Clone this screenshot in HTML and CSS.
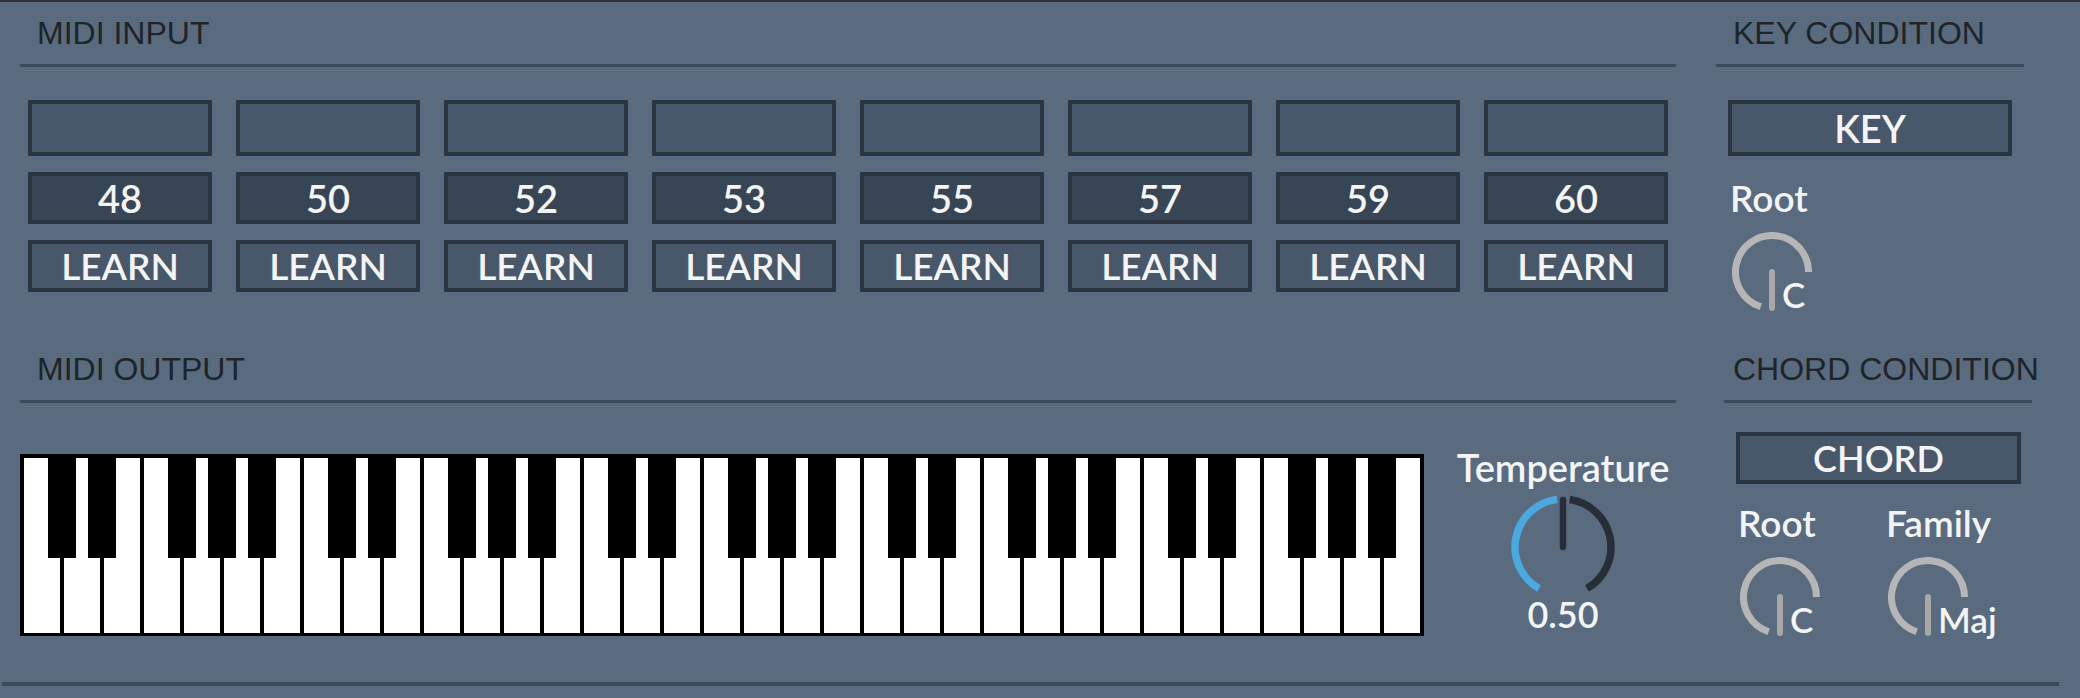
FILE: index.html
```html
<!doctype html>
<html>
<head>
<meta charset="utf-8">
<title>MIDI Chord Generator</title>
<link rel="stylesheet" href="styles.css">
</head>
<body>
<div id="panel">
	<div class="row row_top">
		<div class="sec sec_input">
			<h2 class="sec_head">MIDI INPUT</h2>
			<div class="slots">
				<div class="slot"><div class="cell note"></div><div class="cell num">48</div><div class="cell learn">LEARN</div></div>
				<div class="slot"><div class="cell note"></div><div class="cell num">50</div><div class="cell learn">LEARN</div></div>
				<div class="slot"><div class="cell note"></div><div class="cell num">52</div><div class="cell learn">LEARN</div></div>
				<div class="slot"><div class="cell note"></div><div class="cell num">53</div><div class="cell learn">LEARN</div></div>
				<div class="slot"><div class="cell note"></div><div class="cell num">55</div><div class="cell learn">LEARN</div></div>
				<div class="slot"><div class="cell note"></div><div class="cell num">57</div><div class="cell learn">LEARN</div></div>
				<div class="slot"><div class="cell note"></div><div class="cell num">59</div><div class="cell learn">LEARN</div></div>
				<div class="slot"><div class="cell note"></div><div class="cell num">60</div><div class="cell learn">LEARN</div></div>
			</div>
		</div>
		<div class="sec sec_key">
			<h2 class="sec_head">KEY CONDITION</h2>
			<div class="btn btn_key">KEY</div>
			<div class="dial">
				<span class="dial_label">Root</span>
				<div class="knob">
					<svg width="80" height="80" viewBox="0 0 80 80">
						<path d="M28.72 74.71 A36.5 36.5 0 1 1 76.5 40" fill="none" stroke="#b6b6b6" stroke-width="7"/>
						<line x1="40" y1="40" x2="40" y2="76" stroke="#a7a7a7" stroke-width="6" stroke-linecap="round"/>
					</svg>
					<span class="knob_val">C</span>
				</div>
			</div>
		</div>
	</div>
	<div class="row row_bottom">
		<div class="sec sec_output">
			<h2 class="sec_head">MIDI OUTPUT</h2>
			<div class="out_body">
				<div class="keyboard">
					<div class="octave"><span class="bk cs"></span><span class="bk ds"></span><span class="bk fs"></span><span class="bk gs"></span><span class="bk as"></span></div>
					<div class="octave"><span class="bk cs"></span><span class="bk ds"></span><span class="bk fs"></span><span class="bk gs"></span><span class="bk as"></span></div>
					<div class="octave"><span class="bk cs"></span><span class="bk ds"></span><span class="bk fs"></span><span class="bk gs"></span><span class="bk as"></span></div>
					<div class="octave"><span class="bk cs"></span><span class="bk ds"></span><span class="bk fs"></span><span class="bk gs"></span><span class="bk as"></span></div>
					<div class="octave"><span class="bk cs"></span><span class="bk ds"></span><span class="bk fs"></span><span class="bk gs"></span><span class="bk as"></span></div>
				</div>
				<div class="temp">
					<span class="temp_label">Temperature</span>
					<svg class="temp_dial" width="110" height="104" viewBox="0 0 110 104">
						<path d="M31 96.57 A48 48 0 0 1 49.15 7.36" fill="none" stroke="#4ba9df" stroke-width="7.5"/>
						<path d="M61.68 7.47 A48 48 0 0 1 79 96.57" fill="none" stroke="#262f38" stroke-width="7.5"/>
						<line x1="55" y1="8" x2="55" y2="55" stroke="#262f38" stroke-width="6.5" stroke-linecap="round"/>
					</svg>
					<span class="temp_val">0.50</span>
				</div>
			</div>
		</div>
		<div class="sec sec_chord">
			<h2 class="sec_head">CHORD CONDITION</h2>
			<div class="btn btn_chord">CHORD</div>
			<div class="chord_dials">
				<div class="dial">
					<span class="dial_label">Root</span>
					<div class="knob">
						<svg width="80" height="80" viewBox="0 0 80 80">
							<path d="M28.72 74.71 A36.5 36.5 0 1 1 76.5 40" fill="none" stroke="#b6b6b6" stroke-width="7"/>
							<line x1="40" y1="40" x2="40" y2="76" stroke="#a7a7a7" stroke-width="6" stroke-linecap="round"/>
						</svg>
						<span class="knob_val">C</span>
					</div>
				</div>
				<div class="dial">
					<span class="dial_label">Family</span>
					<div class="knob">
						<svg width="80" height="80" viewBox="0 0 80 80">
							<path d="M28.72 74.71 A36.5 36.5 0 1 1 76.5 40" fill="none" stroke="#b6b6b6" stroke-width="7"/>
							<line x1="40" y1="40" x2="40" y2="76" stroke="#a7a7a7" stroke-width="6" stroke-linecap="round"/>
						</svg>
						<span class="knob_val">Maj</span>
					</div>
				</div>
			</div>
		</div>
	</div>
	<div class="bottom_rule"></div>
</div>
</body>
</html>
```

FILE: styles.css
```css
body,h1,h2,h3,div,p,span{margin: 0; padding: 0;}
html,body{background: #5a6b80;}
body{font-family: Lato, "Liberation Sans", sans-serif; font-weight: 600; color: #f3f4f5;}

#panel{
	width: 2080px;
	height: 698px;
	box-sizing: border-box;
	border-top: 2px solid #30353a;
	background-color: #5a6b80;
	overflow: hidden;
}
.row{
	display: flex;
}
.row_top{
	height: 336px;
}
.row_bottom{
	height: 344px;
}
.sec_head{
	height: 47px;
	padding: 15px 0 0 17px;
	border-bottom: 3px solid #3c4a5b;
	font-family: "Liberation Sans", Arial, sans-serif;
	font-size: 32px;
	line-height: 32px;
	font-weight: normal;
	color: #1f2429;
	white-space: nowrap;
}
.sec_input,
.sec_output{
	width: 1656px;
	margin-left: 20px;
}
.sec_key{
	width: 308px;
	margin-left: 40px;
}
.sec_chord{
	width: 308px;
	margin-left: 48px;
}
.sec_chord .sec_head{
	padding-left: 9px;
}

/* midi input slots */
.slots{
	display: grid;
	grid-template-columns: repeat(8, 184px);
	column-gap: 24px;
	margin: 33px 0 0 8px;
}
.slot{
	display: flex;
	flex-direction: column;
	gap: 16px;
}
.cell,
.btn{
	box-sizing: border-box;
	border: 4px solid #2b3541;
	background-color: #485769;
	display: flex;
	align-items: center;
	justify-content: center;
	font-size: 38px;
	line-height: 38px;
}
.cell.note{
	height: 56px;
}
.cell.num{
	height: 52px;
	background-color: #384555;
}
.cell.learn{
	height: 52px;
	font-size: 37px;
}

/* conditions */
.btn_key{
	width: 284px;
	height: 56px;
	margin: 33px 0 0 12px;
}
.btn_chord{
	width: 285px;
	height: 52px;
	margin: 29px 0 0 12px;
	font-size: 36px;
}
.dial{
	display: flex;
	flex-direction: column;
	align-items: flex-start;
}
.dial_label{
	font-size: 37px;
	line-height: 37px;
	margin-left: -2px;
}
.sec_key .dial{
	margin: 23px 0 0 16px;
}
.chord_dials{
	display: flex;
	gap: 68px;
	margin: 20px 0 0 16px;
}
.knob{
	position: relative;
	width: 80px;
	height: 80px;
	margin-top: 16px;
}
.knob svg{
	display: block;
}
.knob_val{
	position: absolute;
	left: 50px;
	top: 45px;
	font-size: 35px;
	line-height: 35px;
}

/* midi output */
.out_body{
	display: flex;
	align-items: flex-start;
}
.keyboard{
	display: flex;
	margin-top: 51px;
	padding: 4px 0 3px 4px;
	background-color: #000;
}
.octave{
	position: relative;
	width: 280px;
	height: 175px;
	background: repeating-linear-gradient(90deg, #fff 0 36px, #000 36px 40px);
}
.bk{
	position: absolute;
	top: 0;
	width: 28px;
	height: 100px;
	background-color: #000;
}
.bk.cs{left: 24px;}
.bk.ds{left: 64px;}
.bk.fs{left: 144px;}
.bk.gs{left: 184px;}
.bk.as{left: 224px;}
.temp{
	width: 220px;
	margin: 45px 0 0 29px;
	display: flex;
	flex-direction: column;
	align-items: center;
}
.temp_label{
	font-size: 38px;
	line-height: 38px;
}
.temp_dial{
	display: block;
	margin-top: 6px;
}
.temp_val{
	font-size: 36px;
	line-height: 36px;
}

.bottom_rule{
	width: 2057px;
	height: 4px;
	margin-left: 2px;
	background-color: #3c4a5b;
}
```
